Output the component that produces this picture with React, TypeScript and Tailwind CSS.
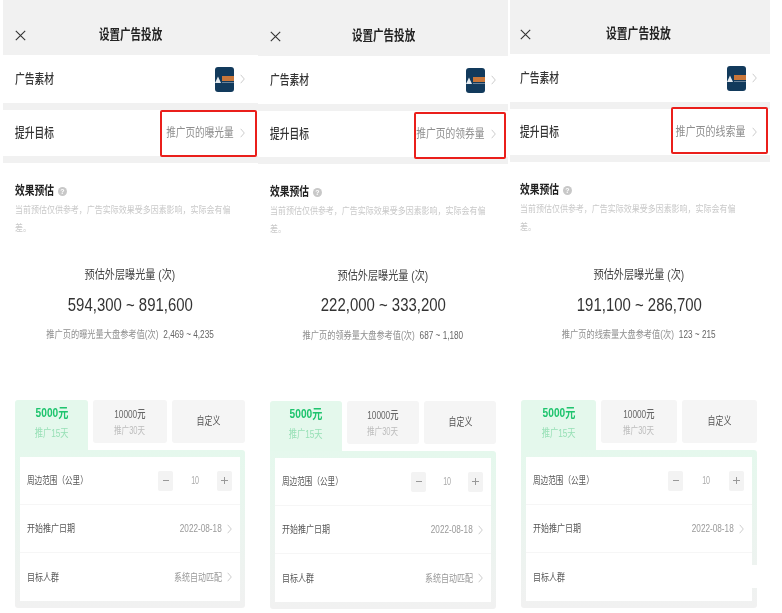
import React from "react";

type Cfg = {
  wrap: string; header: string; rowPad: string; secPad: string; headTop: string; statTop: string; numTop: string; subTop: string; titleMl: string; titleScale: string; goalScale: string;
  cardMargin: string; stepper: string; goal: string; numbers: string; sub: string; ref: string; red: string; hideLast?: boolean;
};

const panels: Cfg[] = [
  { wrap: "ml-[3px] w-[255px]", header: "h-[55px]", rowPad: "pl-[12px] pr-[13px]", secPad: "pl-[12px]", headTop: "pt-[21px]", statTop: "mt-[28px]", numTop: "mt-[8px]", subTop: "mt-[8px]", titleMl: "ml-[73px]", titleScale: "scale-x-[0.78]", goalScale: "scale-x-[0.77]",
    cardMargin: "ml-[12px] mr-[13px]", stepper: "w-[74px]", goal: "推广页的曝光量", numbers: "594,300 ~ 891,600", sub: "推广页的曝光量大盘参考值(次)", ref: "2,469 ~ 4,235", red: "left-[157px] top-[110px] w-[97px] h-[47px]" },
  { wrap: "w-[250px]", header: "h-[56px]", rowPad: "pl-[12px] pr-[12px]", secPad: "pl-[12px]", headTop: "pt-[21px]", statTop: "mt-[28px]", numTop: "mt-[7px]", subTop: "mt-[9px]", titleMl: "ml-[71px]", titleScale: "scale-x-[0.78]", goalScale: "scale-x-[0.78]",
    cardMargin: "ml-[12px] mr-[12px]", stepper: "w-[72px]", goal: "推广页的领券量", numbers: "222,000 ~ 333,200", sub: "推广页的领券量大盘参考值(次)", ref: "687 ~ 1,180", red: "left-[156px] top-[112px] w-[92px] h-[47px]" },
  { wrap: "ml-[2px] w-[260px]", header: "h-[54px]", rowPad: "pl-[10px] pr-[13px]", secPad: "pl-[10px]", headTop: "pt-[21px]", statTop: "mt-[29px]", numTop: "mt-[8px]", subTop: "mt-[8px]", titleMl: "ml-[75px]", titleScale: "scale-x-[0.8]", goalScale: "scale-x-[0.8]",
    cardMargin: "ml-[11px] mr-[13px]", stepper: "w-[76px]", goal: "推广页的线索量", numbers: "191,100 ~ 286,700", sub: "推广页的线索量大盘参考值(次)", ref: "123 ~ 215", red: "left-[161px] top-[107px] w-[97px] h-[47px]", hideLast: true },
];

function Chevron() {
  return (
    <svg width="5" height="10" viewBox="0 0 5 10" className="shrink-0" fill="none">
      <path d="M0.7 0.8 L4.3 5 L0.7 9.2" stroke="#c6c6c6" strokeWidth="0.9" />
    </svg>
  );
}

function Thumb() {
  return (
    <svg width="19" height="25" viewBox="0 0 19 25" className="shrink-0">
      <rect width="19" height="25" rx="3" fill="#123a5c" />
      <path d="M0 16 L3 9.5 L6 16 Z" fill="#e6ebf0" />
      <rect x="7" y="9" width="12" height="5" fill="#c8763a" />
      <rect x="7" y="15" width="12" height="1" fill="#6a8299" />
    </svg>
  );
}

function Panel({ c }: { c: Cfg }) {
  return (
    <div className={`${c.wrap} relative flex h-[613px] shrink-0 flex-col bg-white`}>
      <div className={`${c.header} relative flex items-end ${c.secPad} bg-[#f1f1f1] pb-[13px]`}>
        <svg width="11" height="11" viewBox="0 0 11 11" className="mb-[1px]" fill="none">
          <path d="M0.8 0.8 L10.2 10.2 M10.2 0.8 L0.8 10.2" stroke="#333" strokeWidth="1.1" />
        </svg>
        <span className={`${c.titleMl} inline-block origin-left ${c.titleScale} text-[13.5px] leading-[14px] font-bold whitespace-nowrap text-[#222]`}>设置广告投放</span>
      </div>
      <div className={`flex h-[48px] items-center justify-between ${c.rowPad}`}>
        <span className="inline-block origin-left scale-x-[0.75] text-[13px] font-medium whitespace-nowrap text-[#333]">广告素材</span>
        <div className="flex items-center gap-[6px]">
          <Thumb />
          <Chevron />
        </div>
      </div>
      <div className="h-[7px] bg-[#f1f1f1]" />
      <div className={`flex h-[46px] items-center justify-between ${c.rowPad}`}>
        <span className="inline-block origin-left scale-x-[0.75] text-[13px] font-medium whitespace-nowrap text-[#333]">提升目标</span>
        <div className="flex items-center gap-[6px]">
          <span className={`inline-block origin-right ${c.goalScale} text-[12.5px] whitespace-nowrap text-[#8e8e8e]`}>{c.goal}</span>
          <Chevron />
        </div>
      </div>
      <div className="h-[7px] bg-[#f1f1f1]" />

      <div className={`${c.headTop} ${c.secPad}`}>
        <div className="flex h-[14px] items-center gap-[3px]">
          <span className="inline-block w-[40px] origin-left scale-x-[0.78] text-[12.5px] leading-[14px] font-bold whitespace-nowrap text-[#222]">效果预估</span>
          <span className="flex h-[9px] w-[9px] items-center justify-center rounded-full bg-[#c8c8c8] text-[7px] leading-none font-bold text-white">?</span>
        </div>
        <div className="mt-[3px] w-[225px] text-[9.5px] leading-[18px] text-[#c9c9c9]">
          <div className="origin-left scale-x-[0.84] whitespace-nowrap">当前预估仅供参考，广告实际效果受多因素影响，实际会有偏</div>
          <div className="origin-left scale-x-[0.84] whitespace-nowrap">差。</div>
        </div>
      </div>

      <div className={`${c.statTop} ${c.cardMargin} flex flex-col items-center`}>
        <div className="h-[20px] scale-x-[0.81] text-[12.5px] leading-[20px] whitespace-nowrap text-[#444]">预估外层曝光量 (次)</div>
        <div className={`${c.numTop} h-[24px] scale-x-[0.83] text-[18px] leading-[24px] whitespace-nowrap text-[#333]`}>{c.numbers}</div>
        <div className={`${c.subTop} flex h-[20px] scale-x-[0.82] items-center gap-[6px] text-[10px] leading-[20px] whitespace-nowrap`}>
          <span className="text-[#8f8f8f]">{c.sub}</span>
          <span className="text-[#666]">{c.ref}</span>
        </div>
      </div>

      <div className={`mt-[55px] ${c.cardMargin} flex h-[50px] items-start gap-[5px]`}>
        <div className="flex h-[50px] flex-1 flex-col items-center rounded-t-[3px] bg-[#e4f8ec] pt-[6px]">
          <span className="scale-x-[0.78] text-[13px] leading-[14px] font-bold whitespace-nowrap text-[#1fc46e]">5000元</span>
          <span className="mt-[5px] scale-x-[0.75] text-[11px] leading-[16px] whitespace-nowrap text-[#97e0b6]">推广15天</span>
        </div>
        <div className="flex h-[43px] flex-1 flex-col items-center rounded-[3px] bg-[#f5f5f5] pt-[7px]">
          <span className="scale-x-[0.75] text-[11px] leading-[14px] font-medium whitespace-nowrap text-[#666]">10000元</span>
          <span className="mt-[2px] scale-x-[0.72] text-[10.5px] leading-[14px] whitespace-nowrap text-[#bdbdbd]">推广30天</span>
        </div>
        <div className="flex h-[43px] flex-1 items-center justify-center rounded-[3px] bg-[#f5f5f5]">
          <span className="scale-x-[0.72] text-[11px] whitespace-nowrap text-[#555]">自定义</span>
        </div>
      </div>

      <div className={`${c.cardMargin} h-[158px] rounded-b-[3px] rounded-tr-[3px] bg-linear-to-b from-[#e5f8ed] to-[#f1f1f1] px-[5px] py-[7px]`}>
        <div className="flex h-[144px] flex-col bg-white">
          <div className="flex h-[48px] items-center justify-between border-b border-[#f6f6f6] pr-[8px] pl-[7px]">
            <span className="inline-block origin-left scale-x-[0.76] text-[10px] whitespace-nowrap text-[#555]">周边范围（公里）</span>
            <div className={`flex items-center justify-between ${c.stepper}`}>
              <span className="flex h-[20px] w-[15px] items-center justify-center rounded-[2px] bg-[#f3f3f3]">
                <span className="h-px w-[6px] bg-[#999]" />
              </span>
              <span className="scale-x-[0.65] text-[11px] text-[#aaa]">10</span>
              <span className="relative flex h-[20px] w-[15px] items-center justify-center rounded-[2px] bg-[#f3f3f3]">
                <svg width="7" height="7" viewBox="0 0 7 7"><path d="M0 3.5 H7 M3.5 0 V7" stroke="#999" strokeWidth="1" /></svg>
              </span>
            </div>
          </div>
          <div className="flex h-[48px] items-center justify-between border-b border-[#f6f6f6] pr-[8px] pl-[7px]">
            <span className="inline-block origin-left scale-x-[0.8] text-[10px] whitespace-nowrap text-[#555]">开始推广日期</span>
            <div className="flex items-center gap-[5px]">
              <span className="inline-block origin-right scale-x-[0.78] text-[10.5px] whitespace-nowrap text-[#999]">2022-08-18</span>
              <Chevron />
            </div>
          </div>
          <div className="relative flex h-[48px] items-center justify-between pr-[8px] pl-[7px]">
            <span className="inline-block origin-left scale-x-[0.8] text-[10px] whitespace-nowrap text-[#555]">目标人群</span>
            {c.hideLast ? (
              <span className="absolute top-[12px] -right-[6px] h-[23px] w-[130px] bg-white" />
            ) : (
              <div className="flex items-center gap-[5px]">
                <span className="inline-block origin-right scale-x-[0.8] text-[10px] whitespace-nowrap text-[#999]">系统自动匹配</span>
                <Chevron />
              </div>
            )}
          </div>
        </div>
      </div>

      <div className={`absolute ${c.red} rounded-[2px] border-2 border-[#ea1f1b]`} />
    </div>
  );
}

export default function App() {
  return (
    <div className="flex h-[613px] w-[782px] overflow-hidden bg-white font-['Liberation_Sans','Noto_Sans_CJK_SC',sans-serif] blur-[0.35px]">
      {panels.map((c) => (
        <Panel key={c.goal} c={c} />
      ))}
    </div>
  );
}
